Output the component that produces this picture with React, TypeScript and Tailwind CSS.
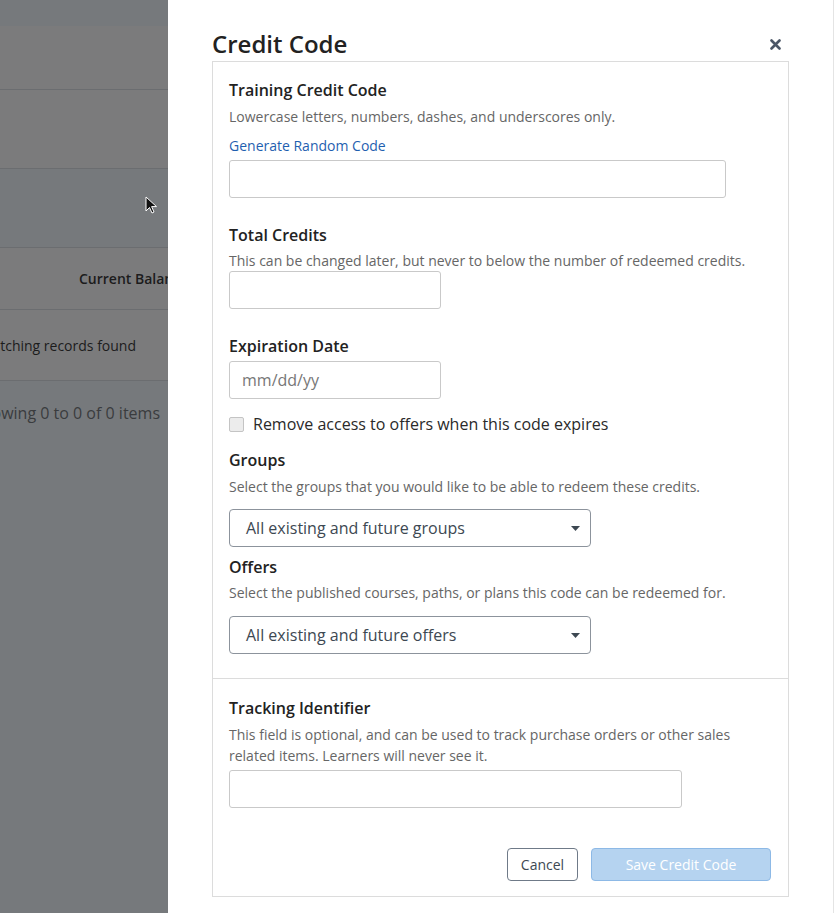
import React from "react";

function Caret() {
  return (
    <svg width="9" height="5" viewBox="0 0 9 5" className="shrink-0">
      <path d="M0 0 H9 L4.5 5 Z" fill="#3d4852" />
    </svg>
  );
}

function Label({ children, className = "" }: { children: React.ReactNode; className?: string }) {
  return <div className={`text-[16px] leading-[22px] font-semibold text-[#222] ${className}`}>{children}</div>;
}

function Desc({ children, className = "" }: { children: React.ReactNode; className?: string }) {
  return <div className={`text-[14px] leading-[20px] text-[#666] ${className}`}>{children}</div>;
}

function Input({ w, className = "", placeholder }: { w: string; className?: string; placeholder?: string }) {
  return (
    <div className={`${w} h-[38px] border border-[#c9c9c9] rounded-[3px] bg-white flex items-center px-[12px] text-[16px] text-[#777] ${className}`}>
      {placeholder}
    </div>
  );
}

function Select({ text, className = "" }: { text: string; className?: string }) {
  return (
    <div className={`w-[362px] h-[38px] border border-[#8c939c] rounded-[4px] bg-white flex items-center justify-between pl-[16px] pr-[10px] text-[16px] text-[#3d4852] ${className}`}>
      <span>{text}</span>
      <Caret />
    </div>
  );
}

export default function App() {
  return (
    <div className="w-[835px] h-[913px] flex overflow-hidden font-['Open_Sans',sans-serif]">
      {/* Left dimmed background */}
      <div className="relative w-[168px] h-full bg-[#76797c] flex flex-col overflow-hidden">
        <div className="h-[26px]" />
        <div className="h-[64px] bg-[#7b7b7c] border-b border-[#6b6d70]" />
        <div className="h-[79px] bg-[#7b7b7c] border-b border-[#6b6d70]" />
        <div className="h-[79px] border-b border-[#6b6d70]" />
        <div className="h-[62px] bg-[#7b7b7c] border-b border-[#6b6d70] flex items-center pl-[79px] whitespace-nowrap text-[14px] font-semibold text-[#1c1c1c]">
          Current Balance
        </div>
        <div className="h-[71px] bg-[#7b7b7c] border-b border-[#6b6d70] flex items-center justify-end pr-[32px] whitespace-nowrap text-[14px] text-[#1c1c1c]">
          No matching records found
        </div>
        <div className="h-[64px] flex items-center justify-end pr-[8px] whitespace-nowrap text-[16px] text-[#3a3c3e]">
          Showing 0 to 0 of 0 items
        </div>
        <svg className="absolute left-[145px] top-[196px]" width="13" height="18" viewBox="0 0 13 18">
          <path d="M1 1 L1 15 L4.5 11.5 L7 17 L9 16 L6.6 10.6 L11.5 10.6 Z" fill="#111" stroke="#fff" strokeWidth="1" strokeLinejoin="round" />
        </svg>
      </div>

      {/* Panel */}
      <div className="flex-1 h-full bg-white flex">
        <div className="flex-1 pl-[44px] pr-[44px] pt-[27px]">
          <div className="flex items-center justify-between h-[34px]">
            <h1 className="text-[24px] leading-[32px] font-semibold text-[#222]">Credit Code</h1>
            <svg width="11" height="11" viewBox="0 0 11 11" className="mr-[8px]">
              <path d="M1.5 1.5 L9.5 9.5 M9.5 1.5 L1.5 9.5" stroke="#4a5566" strokeWidth="2.6" strokeLinecap="round" />
            </svg>
          </div>

          <div className="border border-[#dcdcdc] w-[577px]">
            {/* Section 1 */}
            <div className="pl-[16px] pr-[17px] pt-[17px] pb-[24px]">
              <Label>Training Credit Code</Label>
              <Desc className="mt-[6px]">Lowercase letters, numbers, dashes, and underscores only.</Desc>
              <div className="mt-[9px] text-[14px] leading-[20px] text-[#1f5fb0]">Generate Random Code</div>
              <Input w="w-[497px]" className="mt-[4px]" />

              <Label className="mt-[26px]">Total Credits</Label>
              <Desc className="mt-[5px]">This can be changed later, but never to below the number of redeemed credits.</Desc>
              <Input w="w-[212px]" />

              <Label className="mt-[26px]">Expiration Date</Label>
              <Input w="w-[212px]" className="mt-[4px]" placeholder="mm/dd/yy" />

              <div className="mt-[15px] flex items-center h-[20px]">
                <div className="w-[15px] h-[15px] border border-[#c4c4c4] bg-[#ececec] rounded-[2px]" />
                <span className="ml-[9px] text-[16px] text-[#2a2a2a]">Remove access to offers when this code expires</span>
              </div>

              <Label className="mt-[15px]">Groups</Label>
              <Desc className="mt-[6px]">Select the groups that you would like to be able to redeem these credits.</Desc>
              <Select text="All existing and future groups" className="mt-[12px]" />

              <Label className="mt-[9px]">Offers</Label>
              <Desc className="mt-[5px]">Select the published courses, paths, or plans this code can be redeemed for.</Desc>
              <Select text="All existing and future offers" className="mt-[13px]" />
            </div>

            {/* Section 2 */}
            <div className="border-t border-[#dcdcdc] pl-[16px] pr-[17px] pt-[18px] pb-[15px]">
              <Label>Tracking Identifier</Label>
              <div className="mt-[5px] text-[14px] leading-[21px] text-[#666] w-[520px]">
                This field is optional, and can be used to track purchase orders or other sales related items. Learners will never see it.
              </div>
              <Input w="w-[453px]" className="mt-[4px]" />

              <div className="mt-[40px] flex justify-end gap-[13px]">
                <div className="w-[71px] h-[33px] border border-[#6f7a88] rounded-[4px] flex items-center justify-center text-[14px] text-[#3d4852]">
                  Cancel
                </div>
                <div className="w-[180px] h-[33px] border border-[#8db9e6] bg-[#b5d3f0] rounded-[4px] flex items-center justify-center text-[14px] text-white">
                  Save Credit Code
                </div>
              </div>
            </div>
          </div>
        </div>
        <div className="w-[1px] h-full bg-[#e4e4e4]" />
        <div className="w-[1px] h-full bg-white" />
      </div>
    </div>
  );
}
